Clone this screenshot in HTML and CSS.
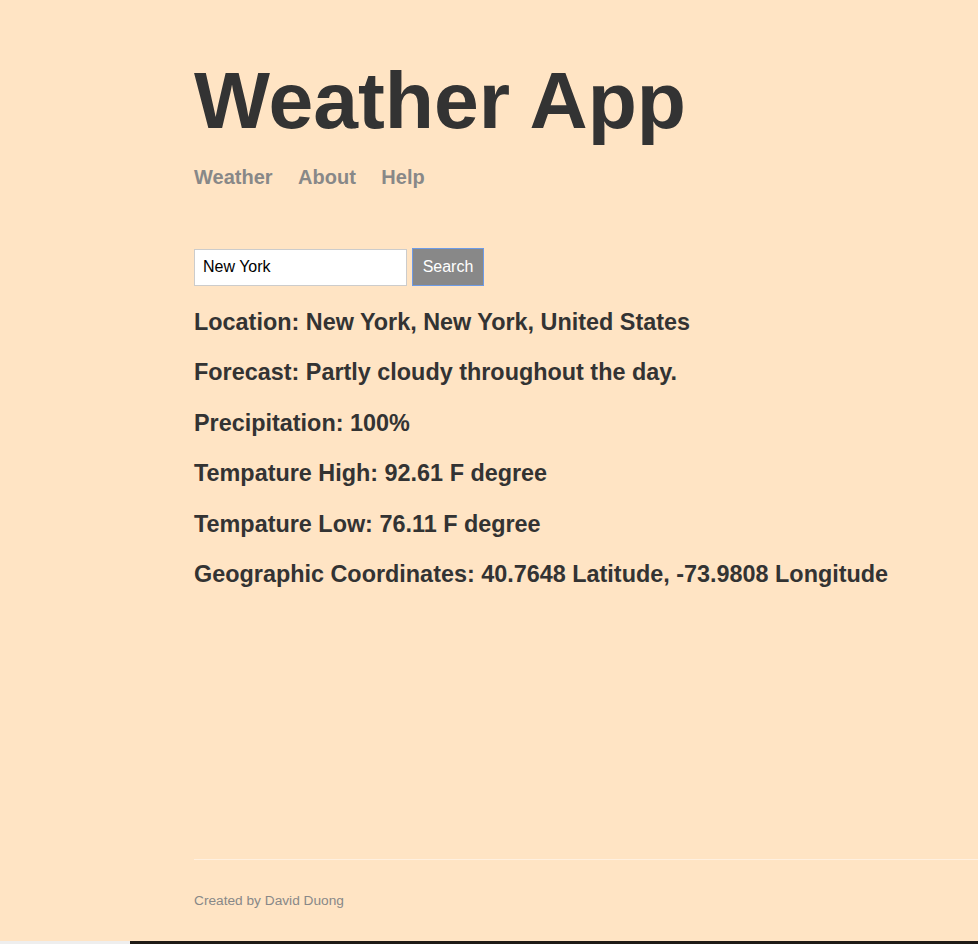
FILE: index.html
```html
<!DOCTYPE html>
<html>
<head>
<meta charset="utf-8">
<link rel="stylesheet" href="styles.css">
</head>
<body>
<div class="page">
  <div class="main-content">
    <header class="header">
      <h1 class="title">Weather App</h1>
      <nav class="nav">
        <a class="nav-link" href="#">Weather</a>
        <a class="nav-link" href="#">About</a>
        <a class="nav-link" href="#">Help</a>
      </nav>
    </header>
    <form class="search">
      <input class="search-input" type="text" value="New York">
      <button class="search-btn" type="button">Search</button>
    </form>
    <div class="results">
      <p class="result">Location: New York, New York, United States</p>
      <p class="result">Forecast: Partly cloudy throughout the day.</p>
      <p class="result">Precipitation: 100%</p>
      <p class="result">Tempature High: 92.61 F degree</p>
      <p class="result">Tempature Low: 76.11 F degree</p>
      <p class="result">Geographic Coordinates: 40.7648 Latitude, -73.9808 Longitude</p>
    </div>
  </div>
  <footer class="footer">
    <p class="credit">Created by David Duong</p>
  </footer>
</div>
<div class="taskbar"><span class="tb-left"></span><span class="tb-right"></span></div>
</body>
</html>
```
FILE: styles.css
```css
html, body {
  margin: 0;
  padding: 0;
}
body {
  background: #ffe4c4;
  color: #333333;
  font-family: "Liberation Sans", Arial, sans-serif;
}
.page {
  height: 941px;
  display: flex;
  flex-direction: column;
  padding-left: 194px;
  box-sizing: border-box;
}
.main-content {
  flex-grow: 1;
}
.title {
  font-size: 80.5px;
  font-weight: bold;
  margin: 0;
  padding-top: 52px;
  line-height: 96px;
}
.nav {
  display: flex;
  gap: 25.5px;
  margin-top: 18px;
}
.nav-link {
  color: #888888;
  font-size: 20px;
  font-weight: bold;
  text-decoration: none;
}
.search {
  display: flex;
  align-items: center;
  gap: 5px;
  margin-top: 59px;
}
.search-input {
  width: 213px;
  height: 37px;
  box-sizing: border-box;
  border: 1px solid #cccccc;
  padding: 0 8px;
  font-size: 16px;
  font-family: "Liberation Sans", Arial, sans-serif;
  color: #000;
  background: #fff;
  margin: 0;
}
.search-btn {
  width: 72px;
  height: 38px;
  box-sizing: border-box;
  border: 1px solid #6e9be6;
  background: #888888;
  color: #ffffff;
  font-size: 16px;
  font-family: "Liberation Sans", Arial, sans-serif;
  margin: 0;
  padding: 0;
}
.results {
  margin-top: 23px;
}
.result {
  margin: 0 0 23.4px 0;
  font-size: 23.4px;
  font-weight: bold;
  line-height: 27px;
}
.footer {
  border-top: 1px solid #fff0e0;
  padding: 33px 0 32px;
}
.credit {
  margin: 0;
  color: #888888;
  font-size: 13.7px;
  line-height: 16px;
}
.taskbar {
  display: flex;
  height: 3px;
}
.tb-left {
  width: 130px;
  background: #eeeeee;
}
.tb-right {
  flex: 1;
  background: #1f1a16;
}
```
